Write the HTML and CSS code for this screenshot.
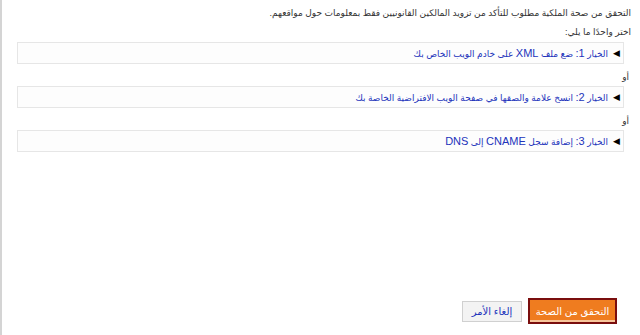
FILE: index.html
```html
<!DOCTYPE html>
<html lang="ar" dir="rtl">
<head>
    <meta charset="UTF-8">
    <title>التحقق من الملكية</title>
    <link rel="stylesheet" href="styles.css">
</head>
<body>
    <div class="page">
        <p class="intro">التحقق من صحة الملكية مطلوب للتأكد من تزويد المالكين القانونيين فقط بمعلومات حول مواقعهم.</p>
        <p class="choose">اختر واحدًا ما يلي:</p>

        <div class="option"><span class="arrow">&#9664;</span><a href="#">الخيار <span class="latin">1:</span> ضع ملف <span class="latin">XML</span> على خادم الويب الخاص بك</a></div>
        <p class="or">أو</p>
        <div class="option"><span class="arrow">&#9664;</span><a href="#">الخيار <span class="latin">2:</span> انسخ علامة والصقها في صفحة الويب الافتراضية الخاصة بك</a></div>
        <p class="or">أو</p>
        <div class="option"><span class="arrow">&#9664;</span><a href="#">الخيار <span class="latin">3:</span> إضافة سجل <span class="latin">CNAME</span> إلى <span class="latin">DNS</span></a></div>

        <div class="actions">
            <button class="btn-verify">التحقق من الصحة</button>
            <button class="btn-cancel">إلغاء الأمر</button>
        </div>
    </div>
</body>
</html>
```

FILE: styles.css
```css
html, body {
    height: 100%;
}
body {
    margin: 0;
    font-family: "Liberation Sans", Arial, "DejaVu Sans", sans-serif;
    font-size: 9px;
    color: #333;
    background-color: #fff;
    border-left: 2px solid #d4d4d4;
    box-sizing: border-box;
}
.page {
    display: flex;
    flex-direction: column;
    height: 100%;
    padding: 6px 9px 0 0;
    box-sizing: border-box;
}
p {
    margin: 0;
}
.intro {
    line-height: 14px;
}
.choose {
    margin-top: 5px;
    line-height: 14px;
}
.option {
    display: flex;
    align-items: center;
    gap: 5px;
    margin: 3px 7px 0 0;
    margin-left: 15px;
    height: 20px;
    padding-right: 3px;
    border: 1px solid #e6e6e6;
    background-color: #fdfdfd;
}
.option .arrow {
    font-size: 9px;
    color: #000;
}
.option a {
    color: #2233bb;
    text-decoration: none;
}
.latin {
    font-size: 11px;
}
.or {
    margin-top: 8px;
    line-height: 11px;
    padding-right: 2px;
}
.actions {
    margin-top: auto;
    margin-bottom: 11px;
    display: flex;
    align-items: center;
    gap: 6px;
    padding-right: 14px;
}
button {
    font-family: inherit;
    font-size: 10px;
    white-space: nowrap;
    cursor: pointer;
    padding: 0;
}
.btn-verify {
    width: 89px;
    height: 26px;
    background-color: #ef7c1f;
    color: #fff;
    border: 2px solid #7a0e0e;
    box-shadow: inset 0 -2px 0 #f7c59a;
}
.btn-cancel {
    width: 60px;
    height: 21px;
    background-color: #f3f3f3;
    color: #2233bb;
    border: 1px solid #d0d0d0;
}
```
